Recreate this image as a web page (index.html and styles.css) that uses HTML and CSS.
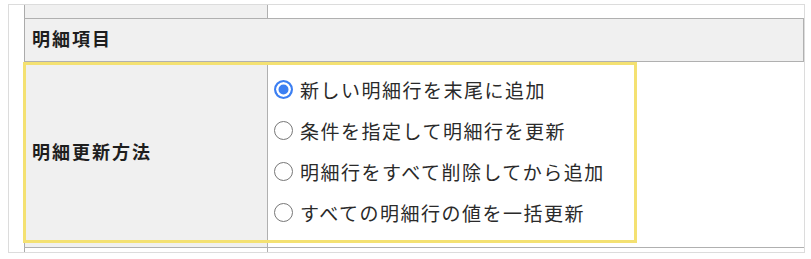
FILE: index.html
```html
<!DOCTYPE html>
<html>
<head>
    <title>明細項目</title>
    <link rel="stylesheet" href="styles.css">
</head>
<body>
    <div class="panel">
        <table class="form-table">
            <colgroup>
                <col class="col-label">
                <col>
            </colgroup>
            <tr class="row-cut-top">
                <th></th>
                <td></td>
            </tr>
            <tr class="row-section">
                <th colspan="2">明細項目</th>
            </tr>
            <tr class="row-main">
                <th>明細更新方法</th>
                <td>
                    <label class="option"><input type="radio" name="mode" checked><span>新しい明細行を末尾に追加</span></label>
                    <label class="option"><input type="radio" name="mode"><span>条件を指定して明細行を更新</span></label>
                    <label class="option"><input type="radio" name="mode"><span>明細行をすべて削除してから追加</span></label>
                    <label class="option"><input type="radio" name="mode"><span>すべての明細行の値を一括更新</span></label>
                </td>
            </tr>
            <tr class="row-cut-bottom">
                <th class="blank"></th>
                <td></td>
            </tr>
        </table>
        <!-- highlight around the update-method row -->
        <div class="highlight"></div>
    </div>
</body>
</html>
```

FILE: styles.css
```css
body {
    margin: 0;
    background-color: #ffffff;
    font-family: "Noto Sans CJK JP", "Noto Sans", sans-serif;
    color: #222;
}

.panel {
    position: relative;
    margin: 4px 6px 0 8px;
    padding-left: 15px;
    height: 247px;
    border: 1px solid #dcdcdc;
    overflow: hidden;
}

.form-table {
    width: 100%;
    table-layout: fixed;
    border-collapse: collapse;
    border-left: 1px solid #ababab;
}

.col-label {
    width: 243px;
}

.form-table th,
.form-table td {
    padding: 0;
    border-top: 1px solid #b0b0b0;
    vertical-align: middle;
}

.form-table th {
    background-color: #f0f0f0;
    border-right: 1px solid #b0b0b0;
    text-align: left;
    font-size: 18px;
    font-weight: bold;
    letter-spacing: 2px;
    padding-left: 7px;
    color: #1e1e1e;
}

.row-cut-top th,
.row-cut-top td {
    height: 13px;
    border-top: none;
}

.row-section th {
    height: 43px;
    padding-bottom: 5px;
    box-sizing: border-box;
}

.row-main th {
    height: 177px;
    padding-bottom: 8px;
}

.row-main td {
    padding: 3px 0 10px 6px;
}

.row-cut-bottom th,
.row-cut-bottom td {
    height: 10px;
}

.row-cut-bottom th.blank {
    background-color: #ffffff;
}

.option {
    display: flex;
    align-items: center;
    height: 41px;
    font-size: 19px;
    letter-spacing: 1.5px;
    color: #2a2a2a;
}

.option input {
    appearance: none;
    -webkit-appearance: none;
    margin: 0 7px 0 0;
    width: 19px;
    height: 19px;
    border: 1.5px solid #777;
    border-radius: 50%;
    background-color: #fff;
    flex-shrink: 0;
}

.option input:checked {
    border: 2px solid #3c7ff2;
    background-color: #3c7ff2;
    box-shadow: inset 0 0 0 2.5px #ffffff;
}

.highlight {
    position: absolute;
    left: 14px;
    top: 57px;
    width: 614px;
    height: 181px;
    box-sizing: border-box;
    border: 3px solid #f4e172;
    pointer-events: none;
}
```
